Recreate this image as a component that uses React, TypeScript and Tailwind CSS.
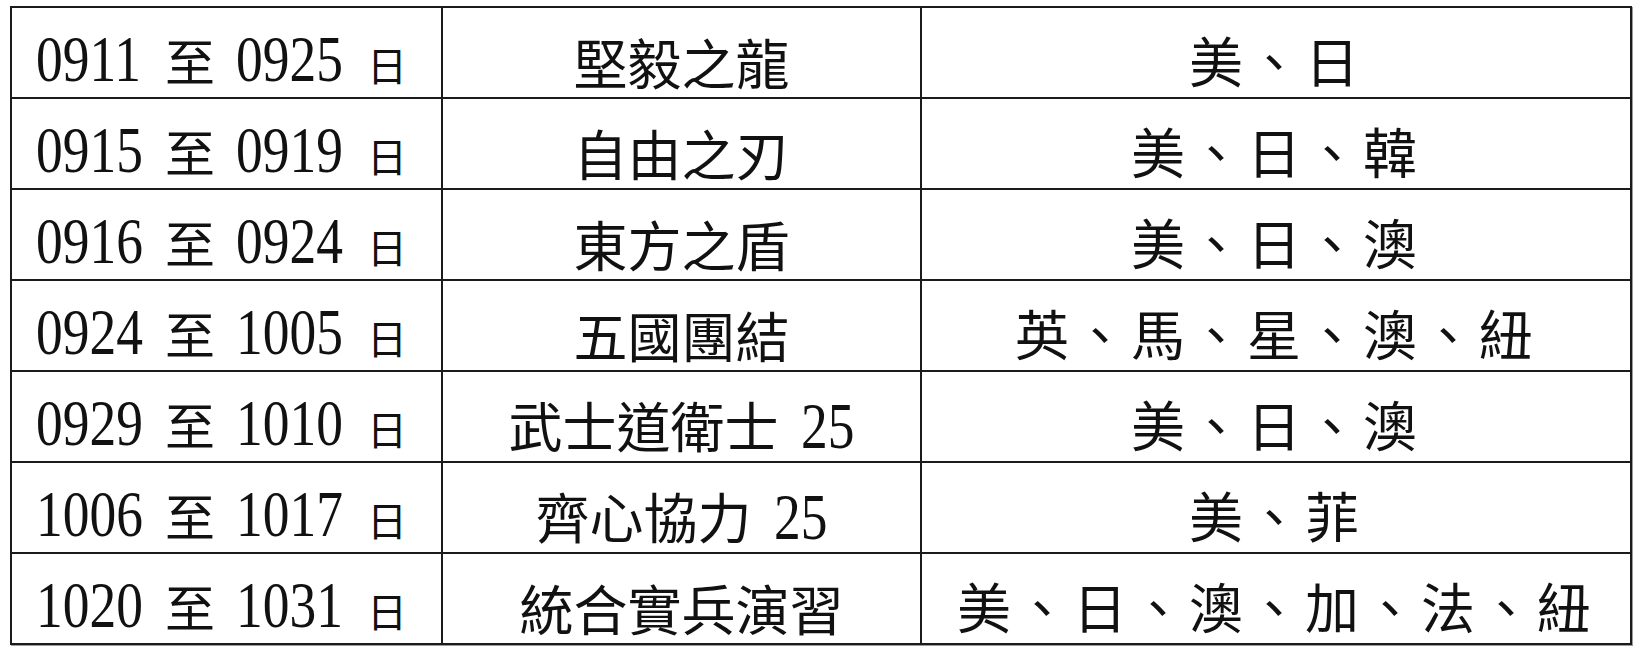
import React from 'react'

interface Exercise {
  from: string
  to: string
  name: string
  suffix?: string
  nations: string
}

const exercises: Exercise[] = [
  { from: '0911', to: '0925', name: '堅毅之龍', nations: '美、日' },
  { from: '0915', to: '0919', name: '自由之刃', nations: '美、日、韓' },
  { from: '0916', to: '0924', name: '東方之盾', nations: '美、日、澳' },
  { from: '0924', to: '1005', name: '五國團結', nations: '英、馬、星、澳、紐' },
  { from: '0929', to: '1010', name: '武士道衛士', suffix: '25', nations: '美、日、澳' },
  { from: '1006', to: '1017', name: '齊心協力', suffix: '25', nations: '美、菲' },
  { from: '1020', to: '1031', name: '統合實兵演習', nations: '美、日、澳、加、法、紐' },
]

// tall narrow digits, squeezed horizontally
function Digits({ value }: { value: string }) {
  const width = value.length === 4 ? 'w-[108px]' : 'w-[54px]'
  return (
    <span className={`inline-block ${width} whitespace-nowrap font-['Liberation_Serif',serif] text-[66px] leading-none`}>
      <span className="inline-block origin-left scale-x-[0.81]">{value}</span>
    </span>
  )
}

export default function App() {
  return (
    <div className="min-h-[662px] w-[1644px] bg-white pl-[10px] pt-[6px] text-[#111]">
      <table className="w-[1620px] table-fixed border-collapse border-2 border-[#1b1b1b] shadow-[1px_1px_0_#9a9a9a]">
        <colgroup>
          <col className="w-[431px]" />
          <col className="w-[479px]" />
          <col className="w-[710px]" />
        </colgroup>
        <tbody>
          {exercises.map((row) => (
            <tr key={row.from} className="h-[91px]">
              {/* dates */}
              <td className="border-2 border-[#1b1b1b] p-0 align-middle">
                <div className="flex items-baseline pl-[24px] pt-[12px]">
                  <Digits value={row.from} />
                  <span className="ml-[21px] font-['Noto_Sans_CJK_TC',sans-serif] text-[50px] leading-none">至</span>
                  <span className="ml-[21px]">
                    <Digits value={row.to} />
                  </span>
                  <span className="ml-[23px] font-['Noto_Sans_CJK_TC',sans-serif] text-[40px] leading-none">日</span>
                </div>
              </td>
              {/* exercise name */}
              <td className="border-2 border-[#1b1b1b] p-0 align-middle">
                <div className="flex items-baseline justify-center pt-[18px]">
                  <span className="font-['Noto_Sans_CJK_TC',sans-serif] text-[54px] leading-none">{row.name}</span>
                  {row.suffix && (
                    <span className="ml-[22px]">
                      <Digits value={row.suffix} />
                    </span>
                  )}
                </div>
              </td>
              {/* participants */}
              <td className="border-2 border-[#1b1b1b] p-0 align-middle">
                <div className="flex justify-center pt-[14px] font-['Noto_Sans_CJK_TC',sans-serif] text-[54px] leading-none tracking-[4px]">
                  {row.nations}
                </div>
              </td>
            </tr>
          ))}
        </tbody>
      </table>
    </div>
  )
}
